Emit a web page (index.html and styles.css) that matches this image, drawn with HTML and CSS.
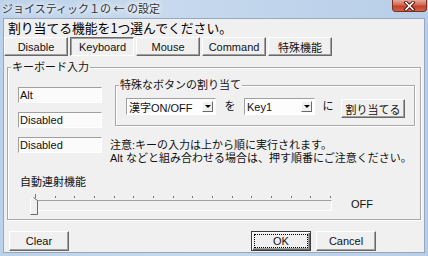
FILE: index.html
```html
<!DOCTYPE html>
<html>
<head>
	<meta charset="utf-8">
	<title>ジョイスティック１の ← の設定</title>
	<link rel="stylesheet" href="styles.css">
</head>
<body>
	<div class="titlebar">
		<span class="title">ジョイスティック１の ← の設定</span>
		<span class="closebox">
			<svg width="13" height="10" viewBox="0 0 13 10">
				<path d="M3 1.5 L10 8.5 M10 1.5 L3 8.5" stroke="#4a1208" stroke-width="3.4" stroke-linecap="square"/>
				<path d="M3 1.5 L10 8.5 M10 1.5 L3 8.5" stroke="#fff" stroke-width="1.6" stroke-linecap="square"/>
			</svg>
		</span>
	</div>
	<div class="client">
		<div class="heading">割り当てる機能を1つ選んでください。</div>
		<div class="tabs">
			<button class="btn tab">Disable</button>
			<button class="btn tab pressed">Keyboard</button>
			<button class="btn tab">Mouse</button>
			<button class="btn tab">Command</button>
			<button class="btn tab">特殊機能</button>
		</div>
		<div class="group kb">
			<span class="group-title">キーボード入力</span>
			<div class="kb-top">
				<div class="keys">
					<div class="edit">Alt</div>
					<div class="edit">Disabled</div>
					<div class="edit">Disabled</div>
				</div>
				<div class="kb-right">
					<div class="group special">
						<span class="group-title">特殊なボタンの割り当て</span>
						<div class="assign-row">
							<div class="combo wide"><span>漢字ON/OFF</span><span class="drop"></span></div>
							<span class="particle">を</span>
							<div class="combo key"><span>Key1</span><span class="drop"></span></div>
							<span class="particle small">に</span>
							<button class="btn assign">割り当てる</button>
						</div>
					</div>
					<p class="note">注意:キーの入力は上から順に実行されます。<br>Alt などと組み合わせる場合は、押す順番にご注意ください。</p>
				</div>
			</div>
			<div class="auto-label">自動連射機能</div>
			<div class="slider-row">
				<div class="slider">
					<div class="ticks">
						<i></i><i></i><i></i><i></i><i></i><i></i><i></i><i></i>
						<i></i><i></i><i></i><i></i><i></i><i></i><i></i><i></i>
					</div>
					<div class="track"></div>
					<svg class="thumb" width="8" height="18" viewBox="0 0 8 18">
						<path d="M0.5 17.5 V3.5 L3.5 0.5 L7.5 3.5 V17.5 Z" fill="#f0f0f0"/>
						<path d="M0.5 17 V3.5 L3.5 0.5" fill="none" stroke="#fff"/>
						<path d="M3.5 0.5 L7.5 3.5 V17.5 H0.5" fill="none" stroke="#696969"/>
					</svg>
				</div>
				<span class="slider-value">OFF</span>
			</div>
		</div>
		<div class="footer">
			<button class="btn">Clear</button>
			<button class="btn default">OK</button>
			<button class="btn">Cancel</button>
		</div>
	</div>
</body>
</html>
```

FILE: styles.css
```css
* {
	box-sizing: border-box;
}
html, body {
	margin: 0;
	padding: 0;
}
body {
	width: 428px;
	height: 256px;
	display: flex;
	flex-direction: column;
	overflow: hidden;
	background: linear-gradient(to right, #bcd1ea, #c6d9ee 40%, #b8cee8);
	font-family: "Liberation Sans", "Noto Sans CJK JP", sans-serif;
	font-size: 11px;
	color: #111;
}
.titlebar {
	height: 18px;
	display: flex;
	align-items: flex-start;
	padding-left: 2px;
}
.title {
	font-family: "Noto Sans CJK JP", sans-serif;
	font-size: 11px;
	line-height: 15px;
	padding-top: 1px;
	color: #333;
	text-shadow: 0 0 4px #fff, 0 0 7px #fff, 0 0 10px #eaf2fb;
}
.closebox {
	margin-left: auto;
	margin-right: 1px;
	width: 35px;
	height: 12px;
	display: flex;
	align-items: center;
	justify-content: center;
	border: 1px solid #7a2e24;
	border-top: none;
	border-radius: 0 0 4px 4px;
	background: linear-gradient(#e6a899, #d26a55 45%, #c2402a 55%, #d36248);
}
.client {
	flex: 1;
	display: flex;
	flex-direction: column;
	margin: 0 3px 3px 3px;
	background: #f0f0f0;
	border: 1px solid #97a8bd;
}
.heading {
	height: 17px;
	line-height: 17px;
	padding-left: 4px;
	font-family: "Noto Sans CJK JP", sans-serif;
	font-size: 12.8px;
	color: #000;
}
.tabs {
	display: flex;
	gap: 2px;
	margin-top: 1px;
}
.btn {
	padding: 0;
	margin: 0;
	background: #f0f0f0;
	border: 1px solid;
	border-color: #fff #696969 #696969 #fff;
	box-shadow: inset -1px -1px 0 #a0a0a0;
	font-family: inherit;
	font-size: 11px;
	color: #111;
	width: 60px;
	height: 20px;
}
.tab {
	width: 64px;
	height: 19px;
}
.tab.pressed {
	border-color: #696969 #fff #fff #696969;
	box-shadow: inset 1px 1px 0 #a0a0a0;
	padding: 1px 0 0 1px;
}
.group {
	position: relative;
	border: 1px solid #a8a8a8;
	box-shadow: inset 1px 1px 0 #fff, 1px 1px 0 #fff;
}
.group-title {
	position: absolute;
	left: 3px;
	top: -8px;
	line-height: 14px;
	padding: 0 1px;
	background: #f0f0f0;
}
.kb {
	margin: 11px 3px 0 3px;
	padding: 0 0 4px 10px;
}
.kb-top {
	display: flex;
}
.keys {
	display: flex;
	flex-direction: column;
	gap: 9px;
	margin-top: 19px;
}
.edit {
	width: 84px;
	height: 16px;
	line-height: 14px;
	padding-left: 1px;
	background: #fbfbfb;
	border: 1px solid;
	border-color: #a0a0a0 #fff #fff #a0a0a0;
}
.kb-right {
	margin-left: 8px;
}
.special {
	width: 300px;
	height: 41px;
	margin: 17px 0 0 5px;
	padding: 12px 0 0 10px;
}
.assign-row {
	display: flex;
	align-items: flex-start;
}
.combo {
	display: flex;
	align-items: center;
	height: 17px;
	padding: 0 2px 0 2px;
	background: #fdfdfd;
	border: 1px solid;
	border-color: #a0a0a0 #fff #fff #a0a0a0;
}
.combo.wide {
	width: 90px;
}
.combo.key {
	width: 71px;
}
.drop {
	margin-left: auto;
	width: 11px;
	height: 11px;
	display: flex;
	align-items: center;
	justify-content: center;
	background: #f0f0f0;
	border: 1px solid;
	border-color: #fff #696969 #696969 #fff;
}
.drop::after {
	content: "";
	border-top: 3px solid #000;
	border-left: 3px solid transparent;
	border-right: 3px solid transparent;
}
.particle {
	width: 28px;
	text-align: center;
	line-height: 17px;
}
.particle.small {
	width: 26px;
}
.assign {
	width: 64px;
	height: 19px;
	margin-top: 1px;
}
.note {
	margin: 13px 0 0 0;
	line-height: 13px;
}
.auto-label {
	margin-top: 10px;
	padding-left: 2px;
	line-height: 14px;
}
.slider-row {
	display: flex;
	align-items: center;
	height: 22px;
	margin-top: 4px;
}
.slider {
	position: relative;
	width: 302px;
	height: 22px;
	margin-left: 12px;
}
.ticks {
	display: flex;
	align-items: flex-end;
	justify-content: space-between;
	width: 296px;
	height: 4px;
	margin: 1px 0 0 5px;
}
.ticks i {
	width: 1px;
	height: 2px;
	background: #777;
}
.ticks i:first-child {
	height: 4px;
}
.track {
	width: 299px;
	height: 11px;
	margin: 2px 0 0 3px;
	border: 1px solid;
	border-color: #a0a0a0 #fff #fff #a0a0a0;
}
.thumb {
	position: absolute;
	left: 0;
	top: 4px;
}
.slider-value {
	margin-left: 19px;
	line-height: 14px;
}
.footer {
	display: flex;
	gap: 5px;
	margin-top: 11px;
	padding: 0 48px 0 5px;
}
.btn.default {
	margin-left: auto;
	border-color: #3c3c3c;
	box-shadow: inset 1px 1px 0 #fff, inset -1px -1px 0 #696969, inset -2px -2px 0 #a0a0a0;
	outline: 1px dotted #000;
	outline-offset: -4px;
}
```
